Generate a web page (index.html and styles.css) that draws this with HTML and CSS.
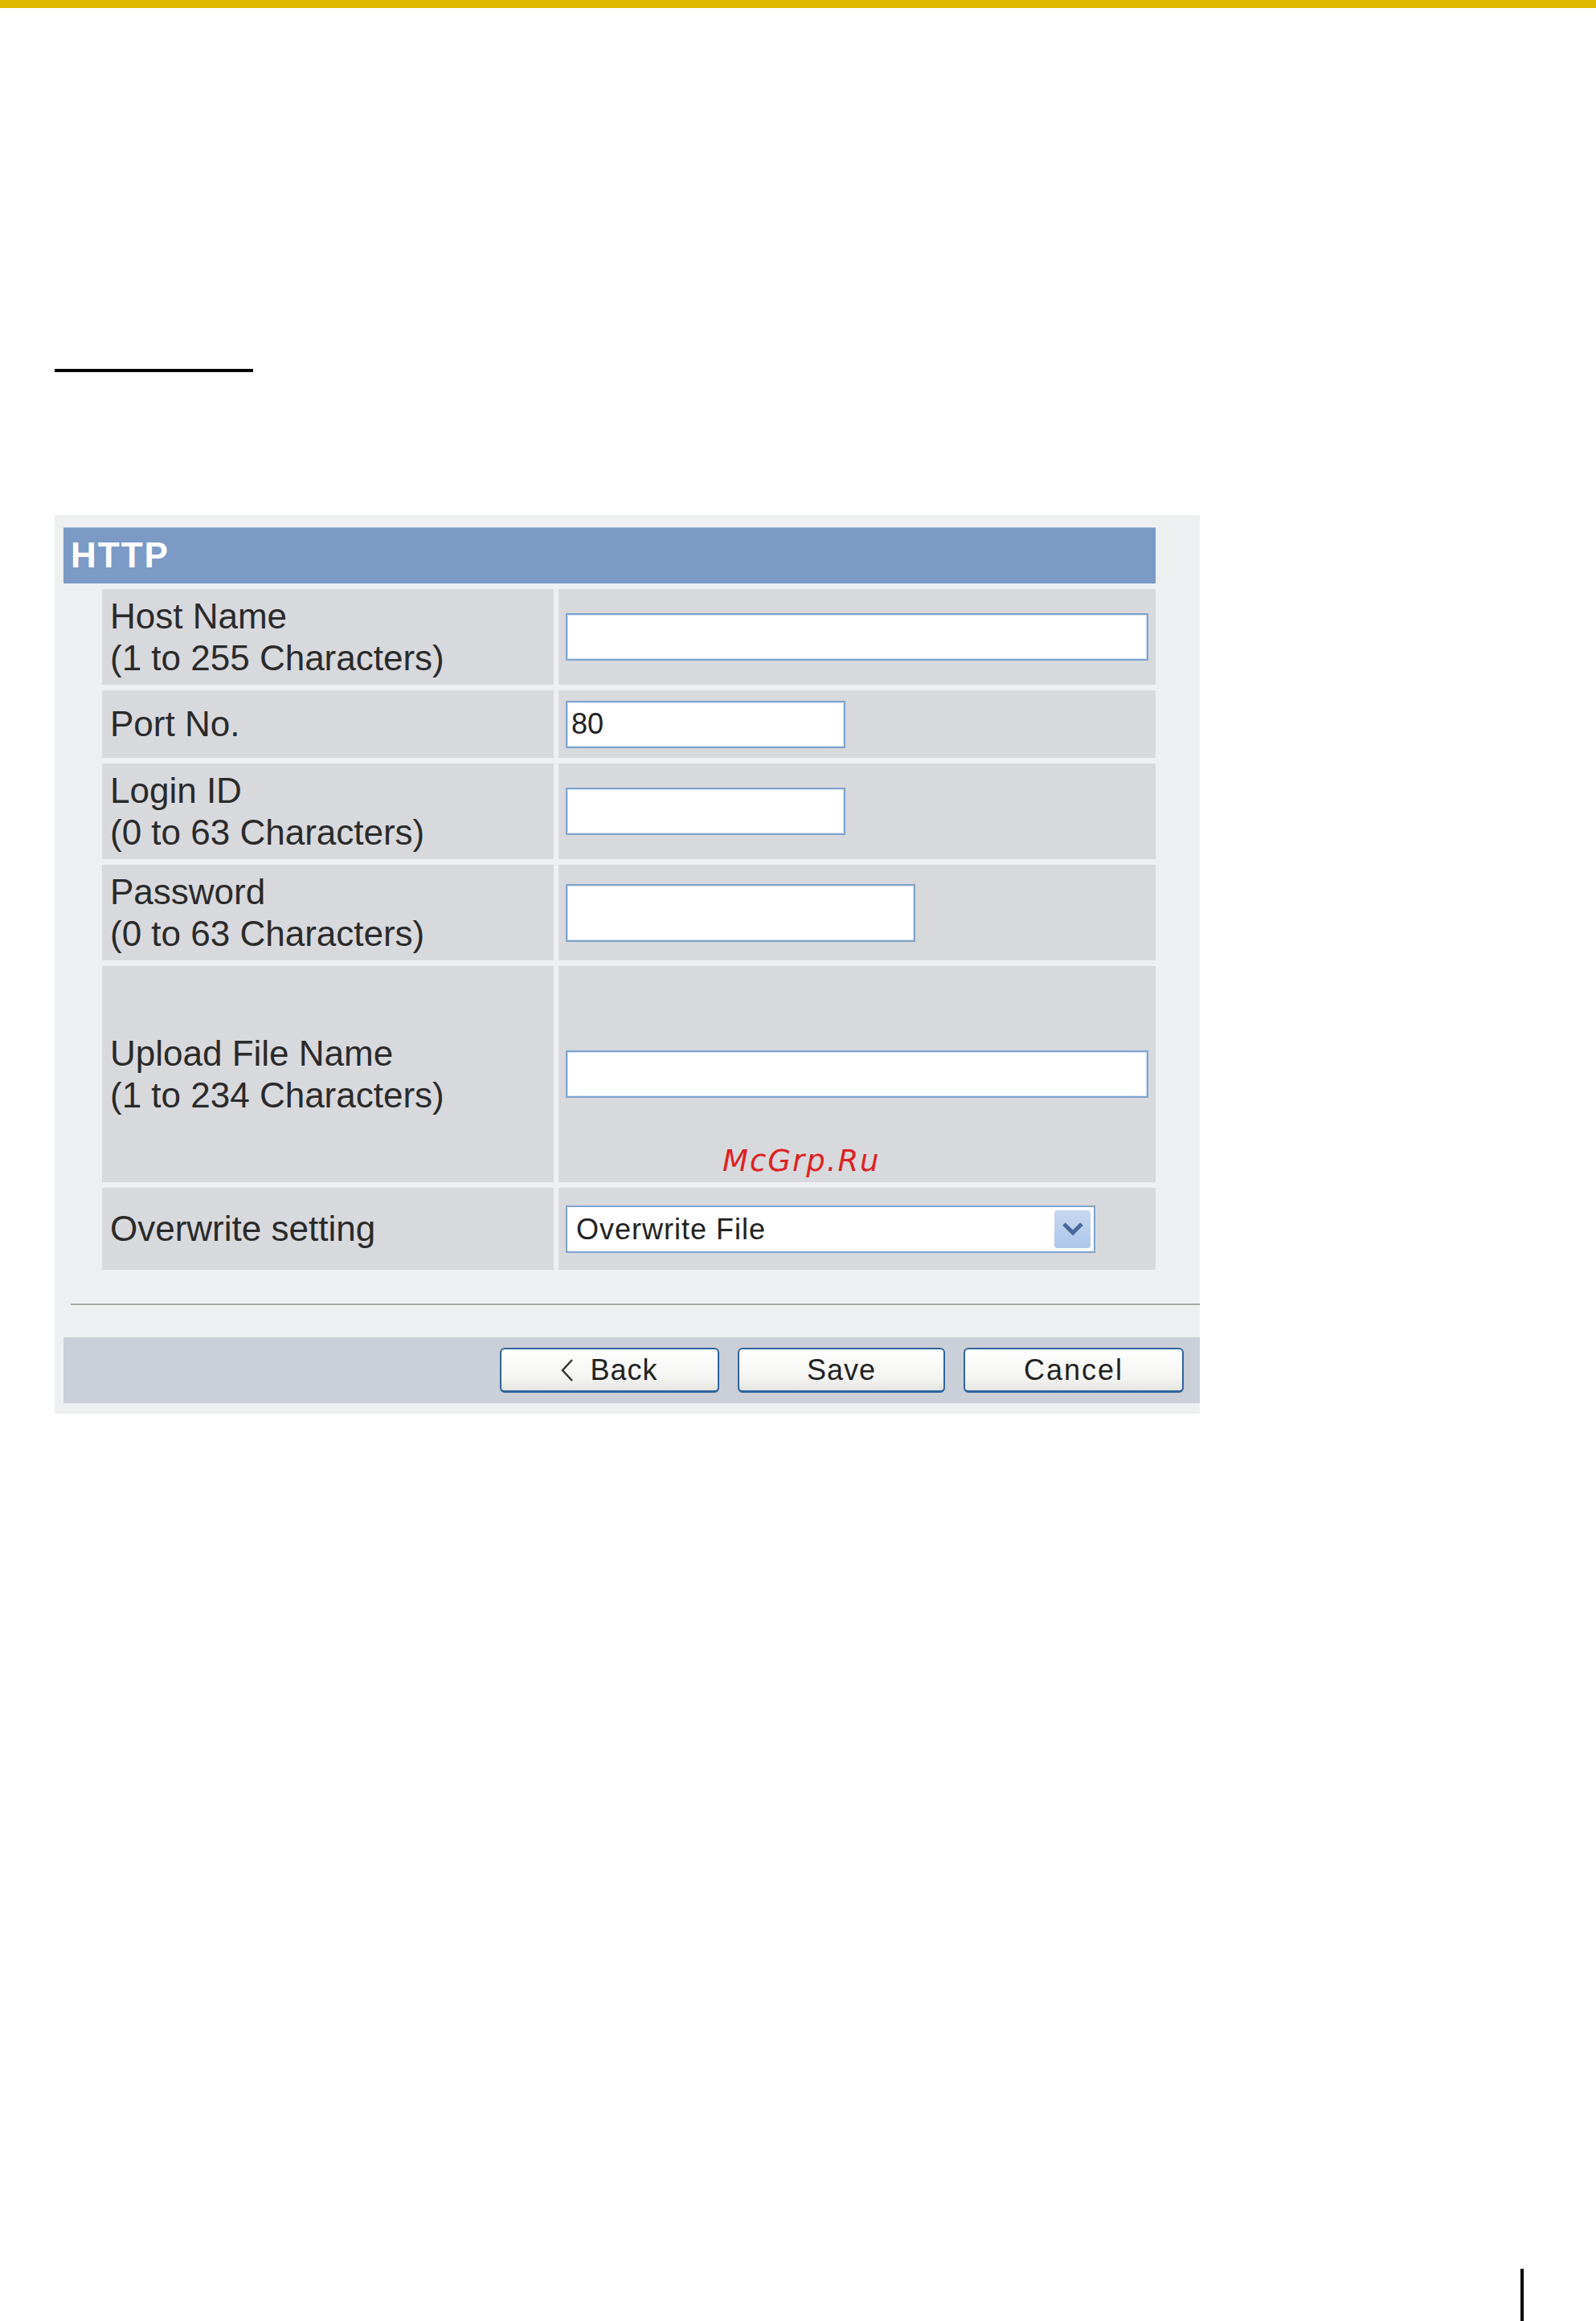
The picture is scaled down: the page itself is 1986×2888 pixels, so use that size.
FILE: index.html
```html
<!DOCTYPE html>
<html lang="en">
<head>
    <meta charset="utf-8">
    <title>HTTP</title>
    <link rel="stylesheet" href="styles.css">
</head>
<body>

<div class="top-bar"></div>

<div class="page">
    <div class="rule"></div>

    <form class="panel" id="http-settings">
        <div class="panel-head">HTTP</div>

        <div class="rows">
            <div class="row row-2line">
                <div class="label">Host Name<br>(1 to 255 Characters)</div>
                <div class="value"><input type="text" class="field field-wide" value=""></div>
            </div>
            <div class="row row-1line">
                <div class="label">Port No.</div>
                <div class="value"><input type="text" class="field field-short" value="80"></div>
            </div>
            <div class="row row-2line">
                <div class="label">Login ID<br>(0 to 63 Characters)</div>
                <div class="value"><input type="text" class="field field-short" value=""></div>
            </div>
            <div class="row row-2line">
                <div class="label">Password<br>(0 to 63 Characters)</div>
                <div class="value"><input type="password" class="field field-pass" value=""></div>
            </div>
            <div class="row row-upload">
                <div class="label">Upload File Name<br>(1 to 234 Characters)</div>
                <div class="value">
                    <input type="text" class="field field-wide" value="">
                    <span class="watermark">McGrp.Ru</span>
                </div>
            </div>
            <div class="row row-select">
                <div class="label">Overwrite setting</div>
                <div class="value">
                    <div class="select-box">
                        <select class="select">
                            <option selected>Overwrite File</option>
                            <option>Do Not Overwrite</option>
                        </select>
                        <span class="select-arrow">
                            <svg width="28" height="18" viewBox="0 0 28 18"><polyline points="3,3 14,14 25,3" fill="none" stroke="#48689a" stroke-width="5"/></svg>
                        </span>
                    </div>
                </div>
            </div>
        </div>

        <hr class="sep">

        <div class="buttons">
            <button type="button" class="btn btn-back">
                <svg width="16" height="28" viewBox="0 0 16 28"><polyline points="14,1 2,14 14,27" fill="none" stroke="#333" stroke-width="2.5"/></svg>
                Back
            </button>
            <button type="button" class="btn btn-save">Save</button>
            <button type="button" class="btn btn-cancel">Cancel</button>
        </div>
    </form>
</div>

<div class="page-mark"></div>

</body>
</html>
```

FILE: styles.css
```css
html, body {
    margin: 0;
    padding: 0;
    background: #fff;
    font-family: "Liberation Sans", Arial, sans-serif;
    color: #2a2a2a;
}

.top-bar {
    height: 10px;
    background: #dfb800;
}

.page {
    box-sizing: border-box;
    height: 2813px;
    padding: 449px 0 0 68px;
}

.rule {
    width: 247px;
    height: 4px;
    background: #000;
}

.panel {
    width: 1425px;
    margin-top: 178px;
    padding: 15px 0 13px 11px;
    box-sizing: border-box;
    background: #eeeff1;
}

    .panel-head {
        width: 1359px;
        height: 70px;
        box-sizing: border-box;
        padding-left: 9px;
        background: #7b9ac6;
        border-top: 1px solid #a6bcdc;
        color: #fff;
        font: bold 44px/68px "Liberation Sans", Arial, sans-serif;
        letter-spacing: 2px;
    }

    .rows {
        display: flex;
        flex-direction: column;
        gap: 7px;
        width: 1311px;
        margin: 7px 0 0 48px;
    }

        .row {
            display: grid;
            grid-template-columns: 562px 743px;
            column-gap: 6px;
        }

        .row-1line { height: 84px; }
        .row-2line { height: 119px; }
        .row-upload { height: 269px; }
        .row-select { height: 102px; }

            .row .label,
            .row .value {
                display: flex;
                align-items: center;
                background: #d8d9dd;
            }

            .row .label {
                padding-left: 10px;
                font-size: 44px;
                line-height: 52px;
                color: #2a2a2a;
            }

            .row .value {
                position: relative;
                padding-left: 9px;
            }

                .field {
                    box-sizing: border-box;
                    height: 59px;
                    margin: 0;
                    padding: 0 5px;
                    border: 2px solid #7ea3cf;
                    box-shadow: inset 0 0 0 1px #d4e2f2;
                    background: #fff;
                    outline: none;
                    font: 36px "Liberation Sans", Arial, sans-serif;
                    color: #222;
                }

                .field-wide { width: 725px; }
                .field-short { width: 348px; }
                .field-pass { width: 435px; height: 72px; }

                .watermark {
                    position: absolute;
                    left: 204px;
                    top: 223px;
                    font: oblique 37px/40px "DejaVu Sans", sans-serif;
                    letter-spacing: 2px;
                    color: #dd2222;
                }

                .select-box {
                    display: flex;
                    align-items: center;
                    box-sizing: border-box;
                    width: 659px;
                    height: 59px;
                    border: 2px solid #7ea3cf;
                    background: #fff;
                }

                    .select {
                        flex: 1;
                        height: 100%;
                        margin: 0;
                        padding: 0 0 0 11px;
                        border: none;
                        outline: none;
                        background: transparent;
                        -webkit-appearance: none;
                        appearance: none;
                        font: 36px "Liberation Sans", Arial, sans-serif;
                        letter-spacing: 1px;
                        color: #222;
                    }

                    .select-arrow {
                        display: flex;
                        align-items: center;
                        justify-content: center;
                        width: 45px;
                        height: 47px;
                        margin-right: 4px;
                        border-radius: 4px;
                        background: linear-gradient(#c6d8f1, #adc7ea);
                    }

    .sep {
        margin: 42px 0 0 9px;
        height: 0;
        border: none;
        border-top: 2px solid #a6a7a0;
        border-bottom: 1px solid #f7f7ef;
    }

    .buttons {
        display: flex;
        justify-content: flex-end;
        align-items: center;
        gap: 23px;
        height: 82px;
        margin-top: 39px;
        padding-right: 20px;
        background: #cbcfd8;
    }

        .btn {
            display: flex;
            align-items: center;
            justify-content: center;
            gap: 20px;
            height: 56px;
            margin: 0;
            padding: 0;
            border: 2px solid #2f639e;
            border-bottom-width: 3px;
            border-radius: 6px;
            background: linear-gradient(#ffffff, #f4f4f2 70%, #e4e4e0);
            font: 36px "Liberation Sans", Arial, sans-serif;
            letter-spacing: 1px;
            color: #222;
            cursor: pointer;
        }

        .btn-back { width: 273px; }
        .btn-save { width: 258px; }
        .btn-cancel { width: 274px; letter-spacing: 2px; }

.page-mark {
    width: 4px;
    height: 65px;
    margin-left: 1892px;
    background: #000;
}
```
